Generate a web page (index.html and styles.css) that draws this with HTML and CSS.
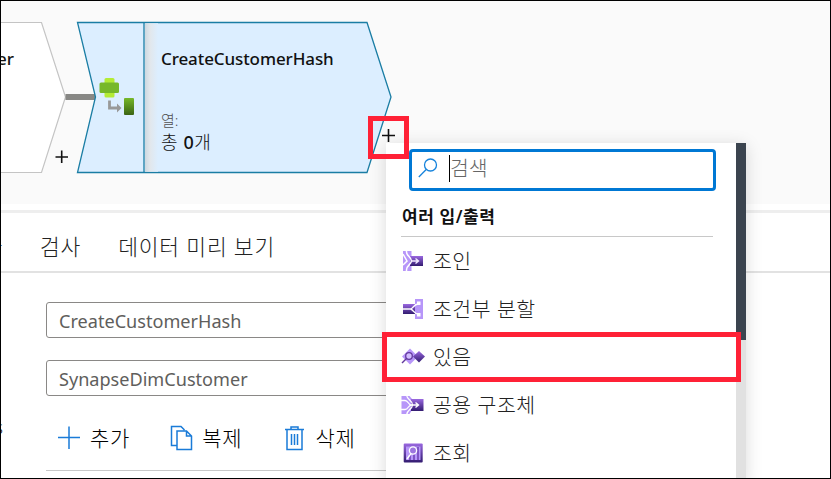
FILE: index.html
```html
<!DOCTYPE html>
<html lang="ko">
<head>
<meta charset="utf-8">
<title>CreateCustomerHash</title>
<link rel="stylesheet" href="styles.css">
</head>
<body>
<div class="frame">
  <div class="canvas">
    <svg class="graph" width="829" height="203" viewBox="1 1 829 203">
      <defs>
        <linearGradient id="fold"><stop offset="0" stop-color="#cdd8e0"/><stop offset=".4" stop-color="#e2e7ec"/><stop offset="1" stop-color="#dceeff"/></linearGradient>
        <linearGradient id="green" x2="0" y2="1"><stop offset="0" stop-color="#76b82a"/><stop offset="1" stop-color="#3b6414"/></linearGradient>
      </defs>
      <path d="M0 22.500H41.500L65.500 97L41.500 172.500H0" fill="#fff" stroke="#c4c4c4" stroke-width="1.200"/>
      <path d="M65.500 97H95" stroke="#888885" stroke-width="6"/>
      <path d="M77.500 22.500H367L391 97L367 172.500H77.500L95.500 97Z" fill="#dceeff" stroke="#1a7da4" stroke-width="1.300"/>
      <path d="M145 23.200h13v148.600h-13z" fill="url(#fold)"/>
      <path d="M144 22v151" stroke="#1a7da4" stroke-width="1.300"/>
      <rect x="104.500" y="78" width="10" height="19.500" rx="1.500" fill="#b4ec36"/>
      <rect x="99.500" y="82.500" width="19.500" height="10.500" rx="1.500" fill="#76b82a"/>
      <path d="M109.500 100.500V108H118" fill="none" stroke="#999" stroke-width="2.800"/>
      <path d="M117 103.500L121.500 108L117 112.500Z" fill="#999"/>
      <rect x="124" y="98" width="10" height="17" rx="1" fill="url(#green)"/>
      <path d="M55.500 157H68M61.700 150.500V163M382 135.500H395M388.500 129V142" stroke="#111" stroke-width="1.600"/>
    </svg>
    <span class="prev">er</span>
    <div class="node">
      <div class="node-title">CreateCustomerHash</div>
      <div class="node-label">열:</div>
      <div class="node-count">총 <b>0</b>개</div>
    </div>
  </div>
  <div class="splitter"></div>
  <div class="tabs"><span class="tab">검사</span><span class="tab tab-preview">데이터 미리 보기</span></div>
  <div class="form">
    <div class="field">CreateCustomerHash</div>
    <div class="field">SynapseDimCustomer</div>
    <div class="toolbar">
      <span class="tool"><svg width="24" height="26" viewBox="0 0 24 26"><path d="M1 12.500H23M12 1.500V24" stroke="#1a7bd8" stroke-width="1.500"/></svg><span>추가</span></span>
      <span class="tool copy"><svg width="24" height="26" viewBox="0 0 24 26" fill="none" stroke="#1a7bd8" stroke-width="1.500"><path d="M7 20.500H1.500V1.500H11L14.500 5M7 6H16.500L21.500 11V24.500H7ZM16.500 6V11H21.500"/></svg><span>복제</span></span>
      <span class="tool trash"><svg width="24" height="26" viewBox="0 0 24 26" fill="none" stroke="#1a7bd8" stroke-width="1.500"><path d="M1 4.500H20M7 4.500V2H14V4.500M3 4.500V24.500H18V4.500M7.500 9V20M10.500 9V20M13.500 9V20"/></svg><span>삭제</span></span>
    </div>
  </div>
  <div class="edge edge-tab">사</div>
  <div class="edge edge-label">s</div>
  <div class="menu">
    <div class="list">
      <div class="search">
        <svg width="20" height="21" viewBox="0 0 20 21" fill="none" stroke="#1683dc" stroke-width="1.300"><circle cx="12.500" cy="7" r="6"/><path d="M8.200 11.500L.8 19"/></svg>
        <span class="caret"></span><span class="hint">검색</span>
      </div>
      <div class="heading">여러 입/출력</div>
      <div class="item"><svg width="22" height="22" viewBox="0 0 22 22">
        <defs><linearGradient id="violet" x2="0" y2="1"><stop offset="0" stop-color="#9a68e0"/><stop offset="1" stop-color="#321b70"/></linearGradient></defs>
        <path d="M0 1H8.500V21H0Z" fill="#b796f9"/><path d="M7 6H20V16H7Z" fill="url(#violet)"/><path d="M3.500 0V2C3.500 6 8 6.500 8.500 11C8 15 3.500 15 3.500 20V22M0 4L4 11L0 15" fill="none" stroke="#fff" stroke-width="1.500"/><path d="M8 11H15.500M12.500 8.500L15.500 11L12.500 13.500" fill="none" stroke="#f2eaff" stroke-width="1.400"/></svg><span>조인</span></div>
      <div class="item"><svg width="22" height="22" viewBox="0 0 22 22"><path d="M0 6H12V16H0Z" fill="url(#violet)"/><path d="M12 1H20V9H12ZM12 13H20V21H12ZM15 8H20V14H15Z" fill="#b796f9"/><path d="M12 7H15V15H12Z" fill="#b796f9"/><path d="M0 11H7.500C10 11 10.500 6 15.500 6M7.500 11C10 11 10.500 16 15.500 16" fill="none" stroke="#fff" stroke-width="1.500"/><path d="M14 3.500H17.500V7H14ZM14 15H17.500V18.500H14Z" fill="#fff"/></svg><span>조건부 분할</span></div>
      <div class="item"><svg class="wide" width="24" height="22" viewBox="-1 0 24 22"><path d="M8 2.500L16 10.500L8 18.500L0 10.500Z" fill="#b796f9"/><path d="M17 5L23 10.500L17 16.500L11 10.500Z" fill="url(#violet)"/><circle cx="7" cy="10" r="3.300" fill="#d2bcff" stroke="#62389d" stroke-width="1.300"/><path d="M4.500 12.500L0 17" stroke="#62389d" stroke-width="1.500"/></svg><span>있음</span></div>
      <div class="item"><svg class="wide" width="24" height="22" viewBox="-1 0 24 22"><path d="M-.5 2H7.500L10 5V16L7.500 20H-.5Z" fill="#b796f9"/><path d="M9 5H21.500V17H9Z" fill="url(#violet)"/><path d="M-1 6.500H3C6.500 6.500 6 11 9.500 11M-1 15.500H3C6.500 15.500 6 11 9.500 11M4.500 1C5.500 7 10 5 10.500 11C10 16 5.500 15 4.500 21" fill="none" stroke="#fff" stroke-width="1.300"/><path d="M9 11H16.500M13.500 8.500L16.500 11L13.500 13.500" fill="none" stroke="#fff" stroke-width="1.400"/></svg><span>공용 구조체</span></div>
      <div class="item"><svg width="22" height="22" viewBox="0 0 22 22"><rect x=".7" y="1.500" width="19" height="19" rx="1" fill="url(#violet)"/><path d="M3 4.500H17.500V18H3Z" fill="#b796f9"/><path d="M7 12V18M11 11V18M15 5V18" stroke="#6e40b4" stroke-width="1.500"/><circle cx="10" cy="8.500" r="3.600" fill="#9d76df" stroke="#fff" stroke-width="1.300"/><path d="M8 11.500L4 17" stroke="#fff" stroke-width="1.500"/></svg><span>조회</span></div>
    </div>
    <div class="track"><div class="thumb"></div></div>
  </div>
  <div class="mark mark-plus"></div>
  <div class="mark mark-item"></div>
</div>
</body>
</html>
```
FILE: styles.css
```css
* { box-sizing: border-box; }
body { margin: 0; }
.frame {
  position: relative;
  width: 831px;
  height: 479px;
  border: 1px solid #000;
  overflow: hidden;
  background: #fff;
  color: #222;
  font: 300 20px/26px "Noto Sans", "Noto Sans CJK KR", sans-serif;
  white-space: nowrap;
}
svg { display: block; flex: none; }
.canvas { position: relative; height: 203px; background: #fafafa; }
.prev { position: absolute; left: -4px; top: 45px; font-size: 17px; font-weight: 500; color: #111; }
.node { position: absolute; left: 160px; top: 45px; color: #111; }
.node-title { font-size: 17px; font-weight: 500; letter-spacing: -.1px; }
.node-label { margin-top: 36px; font-size: 15px; line-height: 24px; color: #505050; }
.node-count { font-size: 18px; line-height: 20px; letter-spacing: .6px; }
.node-count b { font-weight: 500; }
.splitter { height: 9px; border-bottom: 3px solid #eee; }
.tabs { display: flex; align-items: center; height: 60px; padding: 9px 0 0 39px; border-bottom: 2px solid #e2e2e2; }
.tab { font-size: 21.500px; letter-spacing: .8px; }
.tab-preview { margin-left: 37px; }
.form { display: flex; flex-direction: column; gap: 22px; padding: 29px 84px 0 45px; }
.field { height: 36px; padding: 5px 12px; border: 1px solid #8a8886; border-radius: 3px; color: #605e5c; font-size: 18.100px; font-weight: 400; }
.toolbar { display: flex; align-items: center; height: 53px; padding: 0 0 13px 11px; border-bottom: 1px solid #c8c8c8; color: #000; font-size: 21px; letter-spacing: .8px; }
.tool { display: flex; align-items: center; gap: 9px; }
.copy { margin-left: 40px; gap: 8px; }
.trash { margin-left: 41px; gap: 8px; }
.edge { position: absolute; width: 26px; text-align: right; font-size: 18px; }
.edge-tab { left: -25px; top: 232px; font-size: 21px; }
.edge-label { left: -24px; top: 413px; }
.menu { position: absolute; left: 385px; top: 142px; width: 360px; height: 340px; display: flex; background: #fff; box-shadow: 0 3px 16px rgba(0, 0, 0, .15); }
.list { width: 350px; }
.search { display: flex; align-items: center; width: 307px; height: 42px; margin: 6px 0 0 23px; border: 3px solid #0078d4; border-radius: 4px; padding: 0 0 3px 6px; color: #666; font-size: 20.500px; }
.hint { margin-top: -2px; }
.caret { width: 1px; height: 27px; margin-left: 11px; background: #000; }
.heading { width: 312px; height: 46px; margin-left: 15px; border-bottom: 1px solid #c8c8c8; padding: 13px 0 0 1px; color: #111; font-size: 17px; font-weight: 600; letter-spacing: .6px; }
.item { display: flex; align-items: center; height: 48px; padding-left: 17px; gap: 8px; font-size: 20.500px; letter-spacing: .5px; }
.item .wide { margin-left: -2px; }
.track { width: 10px; background: #e1e1e1; }
.thumb { height: 197px; background: #3b444f; }
.mark { position: absolute; border: 5px solid #ff2136; }
.mark-plus { left: 367px; top: 115px; width: 41px; height: 43px; }
.mark-item { left: 381px; top: 331px; width: 359px; height: 50px; }
```
